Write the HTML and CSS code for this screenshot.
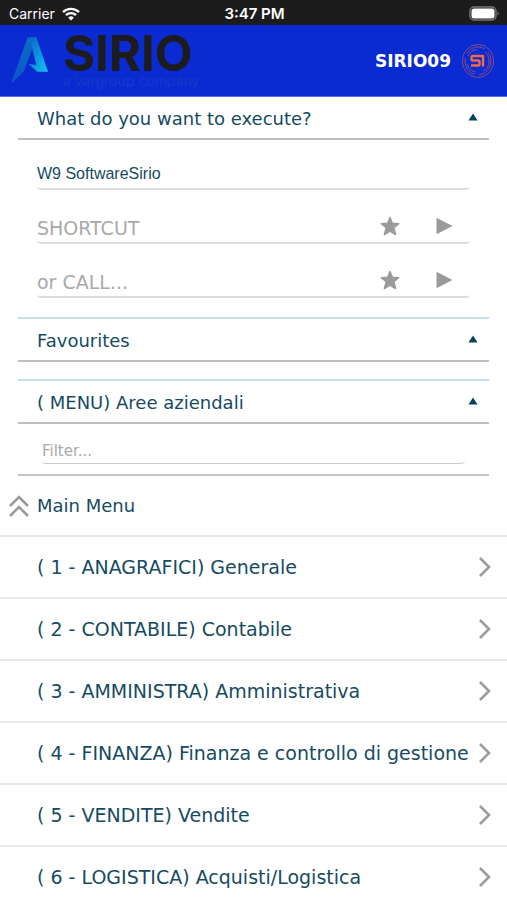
FILE: index.html
```html
<!DOCTYPE html>
<html lang="en">
<head>
<meta charset="utf-8">
<meta name="viewport" content="width=device-width, initial-scale=1">
<title>Sirio</title>
<link rel="stylesheet" href="styles.css">
</head>
<body>
<svg class="sprite" aria-hidden="true">
  <symbol id="star" viewBox="0 0 20 20"><path d="M10 1.500l2.300 5.700 6.400.5-4.900 4 1.800 6.800-5.600-3.500-5.600 3.500 1.800-6.800-4.900-4 6.400-.5z" fill="#9b9b9b" stroke="#9b9b9b" stroke-width="1.500" stroke-linejoin="round"/></symbol>
  <symbol id="play" viewBox="0 0 20 20"><path d="M3 2.500v15L17.500 10z" fill="#9b9b9b" stroke="#9b9b9b" stroke-linejoin="round"/></symbol>
  <symbol id="up" viewBox="0 0 10 8"><path d="M5 .5l4.500 7H.5z" fill="#084058"/></symbol>
  <symbol id="chevron" viewBox="0 0 12 20"><path d="M1 1l9 9-9 9" fill="none" stroke="#9b9b9b" stroke-width="2.500"/></symbol>
</svg>
<div class="status">
  <span class="carrier">Carrier
    <svg class="wifi" viewBox="0 0 18 14" aria-hidden="true"><g fill="none" stroke="#fff" stroke-width="2.400"><path d="M1 5.200a11.300 11.300 0 0 1 16 0"/><path d="M4 8.200a7 7 0 0 1 10 0"/></g><path d="M9 13.500l-2.800-2.800a4 4 0 0 1 5.600 0z" fill="#fff"/></svg>
  </span>
  <span class="time">3:47 PM</span>
  <span class="power"><svg viewBox="0 0 31 15" aria-hidden="true"><rect x="1" y="1" width="26" height="13" rx="4" fill="none" stroke="#777" stroke-width="1.400"/><rect x="2.500" y="2.500" width="23" height="10" rx="2.500" fill="#fff"/><path d="M28.500 5.500q2.500 2 0 4z" fill="#777"/></svg></span>
</div>
<header class="header">
  <a class="brand" href="#">
    <svg class="mark" viewBox="0 0 40 50" aria-hidden="true">
      <defs>
        <linearGradient id="left" x1="0" y1="0" x2="0" y2="1"><stop offset="0" stop-color="#0a6fc4"/><stop offset="1" stop-color="#0b54c8"/></linearGradient>
        <linearGradient id="right" x1="0" y1="0" x2="1" y2="1"><stop offset="0" stop-color="#0b62cc"/><stop offset="1" stop-color="#12c4ee"/></linearGradient>
      </defs>
      <path d="M17 1h9L13 36 0 48z" fill="url(#left)"/>
      <path d="M19 1h7l12 35H27l-9-8 8 1z" fill="url(#right)"/>
    </svg>
    <span class="words"><span class="name">SIRIO</span><span class="tag">a vargroup company</span></span>
  </a>
  <span class="user">SIRIO09</span>
  <svg class="badge" viewBox="0 0 34 36" aria-hidden="true">
    <g fill="none" stroke="#8a4a86"><ellipse cx="17" cy="18" rx="15.500" ry="16.500"/><ellipse cx="17" cy="18" rx="13" ry="14" stroke-dasharray="20 5"/><ellipse cx="17" cy="18" rx="11" ry="11.500" stroke-dasharray="12 8"/></g>
    <path d="M22 13H12q-1.500 0-1.500 1.500v1.500q0 1.500 1.500 1.500h5q1.500 0 1.500 1.500v2q0 1.500-1.500 1.500H10M22 12v11.500" fill="none" stroke="#ef6a45" stroke-width="2.400"/>
  </svg>
</header>
<main>
  <section class="panel">
    <h2><button class="toggle" type="button">What do you want to execute?<svg class="arrow" aria-hidden="true"><use href="#up"/></svg></button></h2>
    <form class="fields">
      <div class="field"><input class="company" type="text" value="W9 SoftwareSirio" aria-label="Company"></div>
      <div class="field"><input type="text" placeholder="SHORTCUT" aria-label="Shortcut">
        <button type="button" aria-label="Favourite shortcut"><svg><use href="#star"/></svg></button>
        <button type="button" aria-label="Run shortcut"><svg><use href="#play"/></svg></button></div>
      <div class="field"><input type="text" placeholder="or CALL..." aria-label="Call">
        <button type="button" aria-label="Favourite call"><svg><use href="#star"/></svg></button>
        <button type="button" aria-label="Run call"><svg><use href="#play"/></svg></button></div>
    </form>
  </section>
  <section class="panel ruled">
    <h2><button class="toggle" type="button">Favourites<svg class="arrow" aria-hidden="true"><use href="#up"/></svg></button></h2>
  </section>
  <section class="panel ruled">
    <h2><button class="toggle" type="button">( MENU) Aree aziendali<svg class="arrow" aria-hidden="true"><use href="#up"/></svg></button></h2>
    <div class="filter"><input type="text" placeholder="Filter..." aria-label="Filter"></div>
  </section>
  <nav class="menu">
    <a class="row main" href="#"><svg class="top" viewBox="0 0 20 22" aria-hidden="true"><path d="M1 11l9-9 9 9M1 21l9-9 9 9" fill="none" stroke="#9b9b9b" stroke-width="2.600"/></svg>Main Menu</a>
    <a class="row" href="#">( 1 - ANAGRAFICI) Generale<svg class="next"><use href="#chevron"/></svg></a>
    <a class="row" href="#">( 2 - CONTABILE) Contabile<svg class="next"><use href="#chevron"/></svg></a>
    <a class="row" href="#">( 3 - AMMINISTRA) Amministrativa<svg class="next"><use href="#chevron"/></svg></a>
    <a class="row" href="#">( 4 - FINANZA) Finanza e controllo di gestione<svg class="next"><use href="#chevron"/></svg></a>
    <a class="row" href="#">( 5 - VENDITE) Vendite<svg class="next"><use href="#chevron"/></svg></a>
    <a class="row" href="#">( 6 - LOGISTICA) Acquisti/Logistica<svg class="next"><use href="#chevron"/></svg></a>
  </nav>
</main>
</body>
</html>
```
FILE: styles.css
```css
* { box-sizing: border-box; }
html { scrollbar-width: none; }
body { margin: 0; background: #fff; color: #164b62; font: 18px/24px "DejaVu Sans", Verdana, sans-serif; }
svg { display: block; flex: none; }
button, input { font: inherit; color: inherit; background: none; border: 0; padding: 0; margin: 0; }
a { color: inherit; text-decoration: none; }
.sprite { position: absolute; width: 0; height: 0; }

.status { display: grid; grid-template-columns: 1fr auto 1fr; align-items: center; height: 25px; padding: 2px 7px 0 9px; background: #1c1c1c; color: #fff; font: 14px/20px Inter, sans-serif; }
.carrier { display: flex; align-items: center; gap: 7px; }
.wifi { width: 18px; height: 14px; }
.time { font-size: 15px; font-weight: 600; }
.power { justify-self: end; }
.power svg { width: 31px; height: 15px; }

.header { display: flex; align-items: center; height: 72px; padding: 0 12px 0 11px; background: #0b2bd2; border-bottom: 1px solid #5a6ee0; }
.brand { display: flex; align-items: center; gap: 13px; margin-right: auto; }
.mark { width: 39px; height: 50px; }
.words { display: flex; flex-direction: column; gap: 2px; padding-top: 2px; }
.name { color: #1c1c1e; font: 700 49px/36px Inter, sans-serif; }
.tag { color: #1439ca; font: 14px/14px Inter, sans-serif; }
.user { color: #fff; font-size: 17px; font-weight: 700; margin-right: 10px; }
.badge { width: 34px; height: 36px; }

.panel { margin: 0 18px; }
.ruled { border-top: 2px solid #c3dfea; margin-bottom: 17px; }
.ruled:last-of-type { margin-bottom: 0; }
h2 { margin: 0; font: inherit; border-bottom: 2px solid #bfbfbf; }
.toggle { display: flex; align-items: center; justify-content: space-between; width: 100%; height: 41px; padding: 2px 11px 0 19px; text-align: left; }
.arrow { width: 10px; height: 8px; margin-bottom: 4px; }
.fields { padding: 0 19px 19px; }
.field { display: flex; align-items: center; height: 54px; padding: 20px 16px 0 0; border-bottom: 2px solid #ddd; border-radius: 4px; }
.field:first-child { height: 50px; }
.field input { flex: 1; min-width: 0; padding-top: 4px; font-size: 19px; }
.field .company { padding: 0; font: 16px/20px "Liberation Sans", Arial, sans-serif; }
.field button { margin-left: 34px; }
.field button svg { width: 20px; height: 20px; }
::placeholder { color: #a9a9a9; opacity: 1; }
.filter { padding: 14px 24px 10px; border-bottom: 2px solid #c4c4c4; }
.filter input { display: block; width: 100%; height: 26px; font-size: 15px; border-bottom: 1px solid #ccc; border-radius: 4px; }

.row { display: flex; align-items: center; justify-content: space-between; height: 62px; padding: 0 16px 0 37px; border-bottom: 2px solid #e8e8e8; font-size: 19px; white-space: nowrap; }
.main { justify-content: flex-start; gap: 8px; height: 61px; padding-left: 9px; font-size: 18px; }
.top { width: 20px; height: 22px; }
.next { width: 12px; height: 20px; }
```
